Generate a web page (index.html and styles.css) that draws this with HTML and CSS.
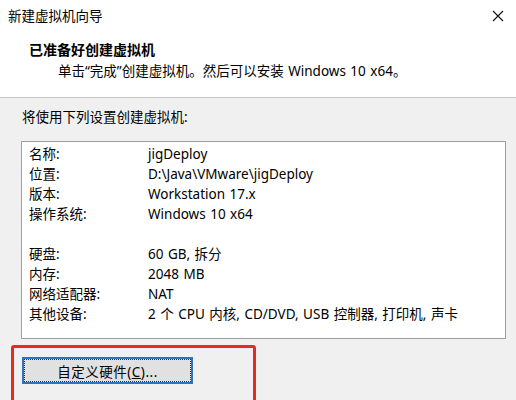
FILE: index.html
```html
<!DOCTYPE html>
<html lang="zh-CN">
  <head>
    <meta charset="UTF-8" />
    <title>新建虚拟机向导</title>
    <link rel="stylesheet" href="styles.css">
  </head>
  <body>
    <div class="header">
      <div class="titlebar">
        <span class="title">新建虚拟机向导</span>
        <svg class="close" width="12" height="12" viewBox="0 0 12 12">
          <path d="M1 1 L11 11 M11 1 L1 11" stroke="#111" stroke-width="1.1" fill="none" />
        </svg>
      </div>
      <div class="heading">已准备好创建虚拟机</div>
      <div class="subheading">单击“完成”创建虚拟机。然后可以安装 Windows 10 x64。</div>
    </div>

    <div class="main">
      <p class="intro">将使用下列设置创建虚拟机:</p>
      <div class="summary">
        <div class="row"><span class="label">名称:</span><span>jigDeploy</span></div>
        <div class="row"><span class="label">位置:</span><span>D:\Java\VMware\jigDeploy</span></div>
        <div class="row"><span class="label">版本:</span><span>Workstation 17.x</span></div>
        <div class="row"><span class="label">操作系统:</span><span>Windows 10 x64</span></div>
        <div class="row"></div>
        <div class="row"><span class="label">硬盘:</span><span>60 GB, 拆分</span></div>
        <div class="row"><span class="label">内存:</span><span>2048 MB</span></div>
        <div class="row"><span class="label">网络适配器:</span><span>NAT</span></div>
        <div class="row"><span class="label">其他设备:</span><span>2 个 CPU 内核, CD/DVD, USB 控制器, 打印机, 声卡</span></div>
      </div>

      <!-- 红框标注 -->
      <div class="highlight">
        <button class="custom-button">自定义硬件(<u>C</u>)...</button>
      </div>
    </div>
  </body>
</html>
```

FILE: styles.css
```css
body {
  margin: 0;
  padding: 0;
  font-family: "Noto Sans", "Noto Sans CJK SC", sans-serif;
  font-size: 13.5px;
  color: #000;
  background-color: #f0f0f0;
  height: 400px;
  overflow: hidden;
}

.header {
  background: #fff;
  height: 98px;
  border-bottom: 1px solid #c4c4c4;
  box-sizing: border-box;
}

.titlebar {
  height: 32px;
  display: flex;
  align-items: center;
  justify-content: space-between;
  padding: 0 12px 0 8px;
}

.title {
  line-height: 20px;
}

.close {
  margin-top: -1px;
}

.heading {
  margin-top: 8px;
  padding-left: 29px;
  font-size: 14px;
  font-weight: bold;
  line-height: 20px;
}

.subheading {
  margin-top: 1px;
  padding-left: 58px;
  line-height: 20px;
  word-spacing: 1px;
}

.main {
  padding: 0 10px 0 21px;
}

.intro {
  margin: 9px 0 0 1px;
  line-height: 20px;
}

.summary {
  margin-top: 14px;
  width: 485px;
  height: 198px;
  box-sizing: border-box;
  background: #fff;
  border: 1px solid #a0a0a0;
  padding: 2px 0 0 7px;
}

.row {
  display: flex;
  height: 20px;
  line-height: 20px;
  word-spacing: 1px;
}

.label {
  width: 119px;
  flex-shrink: 0;
}

.highlight {
  margin: 6px 0 0 -10px;
  width: 245px;
  height: 70px;
  box-sizing: border-box;
  border: 3px solid #e52b20;
  border-radius: 3px;
  padding: 9px 0 0 8px;
}

.custom-button {
  width: 171px;
  height: 27px;
  font-family: "Noto Sans", "Noto Sans CJK SC", sans-serif;
  font-size: 13.5px;
  letter-spacing: 0.5px;
  color: #000;
  background: #e1e1e1;
  border: 2px solid #2f74c0;
  outline: 1px dotted #333;
  outline-offset: -3px;
  padding: 0;
  cursor: pointer;
}
```
